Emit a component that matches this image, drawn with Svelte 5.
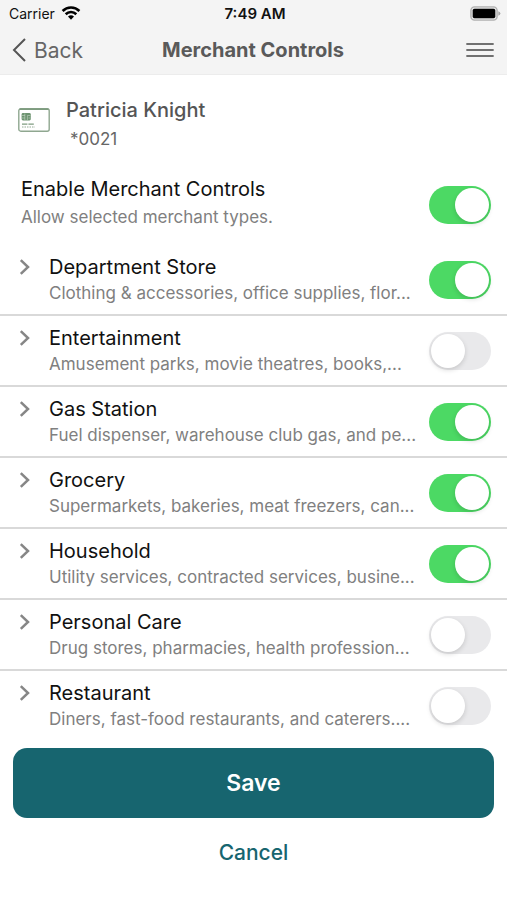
<script>
  let enabled = $state(true);
  let merchants = $state([
    { name: 'Department Store', detail: 'Clothing & accessories, office supplies, flor...', on: true },
    { name: 'Entertainment', detail: 'Amusement parks, movie theatres, books,...', on: false },
    { name: 'Gas Station', detail: 'Fuel dispenser, warehouse club gas, and pe...', on: true },
    { name: 'Grocery', detail: 'Supermarkets, bakeries, meat freezers, can...', on: true },
    { name: 'Household', detail: 'Utility services, contracted services, busine...', on: true },
    { name: 'Personal Care', detail: 'Drug stores, pharmacies, health profession...', on: false },
    { name: 'Restaurant', detail: 'Diners, fast-food restaurants, and caterers....', on: false }
  ]);
</script>

<div class="screen">
  <header>
    <div class="status">
      <div class="carrier">
        <span>Carrier</span>
        <svg width="20" height="14" viewBox="0 0 20 14" fill="none" stroke="#000" stroke-width="2.6">
          <path d="M1.6 5A12 12 0 0 1 18.4 5" />
          <path d="M4.7 8.2A7.6 7.6 0 0 1 15.3 8.2" />
          <path d="M10 13.7L7 10.6A4.3 4.3 0 0 1 13 10.6Z" fill="#000" stroke="none" />
        </svg>
      </div>
      <time>7:49 AM</time>
      <svg class="battery" width="31" height="15" viewBox="0 0 31 15">
        <rect x="0.9" y="0.9" width="26.2" height="13.2" rx="3.6" fill="#e4e4e4" stroke="#b0b0b0" stroke-width="1.4" />
        <rect x="2.7" y="2.7" width="22.6" height="9.6" rx="1.8" fill="#000" />
        <path d="M28.3 5.2Q30.4 6 30.4 7.5T28.3 9.8Z" fill="#a6a6a6" />
      </svg>
    </div>
    <nav>
      <a class="back" href="#back">
        <svg width="14" height="24" viewBox="0 0 14 24" fill="none" stroke="#555" stroke-width="2">
          <path d="M13 1L2 12L13 23" />
        </svg>
        Back
      </a>
      <h1>Merchant Controls</h1>
      <button class="menu" aria-label="Menu">
        <svg width="28" height="16" viewBox="0 0 28 16" stroke="#707070" stroke-width="1.8" stroke-linecap="round">
          <path d="M1 2H27M1 8H27M1 14H27" />
        </svg>
      </button>
    </nav>
  </header>

  <main>
    <section class="account">
      <svg width="32" height="24" viewBox="0 0 32 24">
        <rect x="0.8" y="0.8" width="30.4" height="22.4" rx="2" fill="#fff" stroke="#8fa790" stroke-width="1.4" />
        <path d="M1.5 1.2H30.5" stroke="#779678" stroke-width="1.4" />
        <rect x="3.6" y="5" width="9.2" height="7.4" rx="1.4" fill="#6d9370" />
        <path d="M4 7.5H7M4 10H7M9.4 7.5V12M9.4 7.5H12.4M10.5 10H12.4M6.8 5.5V12" stroke="#c5d6c6" stroke-width="0.6" />
        <path d="M4 16.2H16" stroke="#7f9c80" stroke-width="1.3" stroke-dasharray="5.4 1" />
        <path d="M4 19H17" stroke="#92a993" stroke-width="1" stroke-dasharray="1.5 1" />
      </svg>
      <div>
        <h2>Patricia Knight</h2>
        <p>*0021</p>
      </div>
    </section>

    <section class="enable">
      <label for="enable-all">
        <span class="name">Enable Merchant Controls</span>
        <span class="detail">Allow selected merchant types.</span>
      </label>
      <input id="enable-all" class="toggle" type="checkbox" role="switch" bind:checked={enabled} />
    </section>

    <ul>
      {#each merchants as merchant, i}
        <li>
          <button class="expand" aria-label="Show {merchant.name} details">
            <svg width="12" height="16" viewBox="0 0 12 16" fill="none" stroke="#868686" stroke-width="2.5">
              <path d="M1.8 1.2L9 8L1.8 14.8" />
            </svg>
          </button>
          <label for="merchant-{i}">
            <span class="name">{merchant.name}</span>
            <span class="detail">{merchant.detail}</span>
          </label>
          <input id="merchant-{i}" class="toggle" type="checkbox" role="switch" bind:checked={merchant.on} />
        </li>
      {/each}
    </ul>
  </main>

  <footer>
    <button class="save">Save</button>
    <button class="cancel">Cancel</button>
  </footer>
</div>

<style>
  :global(body) {
    margin: 0;
    background: #fff;
  }
  .screen {
    font-family: Inter, 'Liberation Sans', sans-serif;
    color: #111;
  }
  h1, h2, p, ul {
    margin: 0;
    padding: 0;
  }
  button {
    font-family: inherit;
    border: 0;
    padding: 0;
    background: none;
    cursor: pointer;
  }
  svg {
    display: block;
    flex: none;
  }
  header {
    background: #f4f4f4;
    border-bottom: 1px solid #ececec;
  }
  .status,
  nav {
    display: grid;
    grid-template-columns: 1fr auto 1fr;
    align-items: center;
  }
  .status {
    height: 26px;
    padding: 0 6px 0 9px;
    font-size: 14px;
  }
  .carrier {
    display: flex;
    align-items: center;
    gap: 6px;
  }
  time {
    font-size: 15px;
    font-weight: 600;
  }
  .battery,
  .menu {
    justify-self: end;
  }
  nav {
    height: 48px;
    padding: 0 13px 0 12px;
  }
  .back {
    display: flex;
    align-items: center;
    gap: 8px;
    font-size: 21px;
    color: #666;
    text-decoration: none;
  }
  h1 {
    font-size: 20px;
    font-weight: 700;
    color: #5a5a5a;
  }
  .account {
    display: flex;
    align-items: flex-start;
    gap: 16px;
    padding: 20px 18px 0;
  }
  .account svg {
    margin-top: 13px;
  }
  h2 {
    font-size: 20px;
    line-height: 30px;
    font-weight: 500;
    color: #555;
  }
  .account p {
    padding-left: 4px;
    font-size: 17px;
    line-height: 28px;
    color: #666;
  }
  .enable {
    display: flex;
    align-items: center;
    justify-content: space-between;
    padding: 22px 16px 10px 21px;
  }
  .name,
  .detail {
    display: block;
    white-space: nowrap;
  }
  .name {
    font-size: 20px;
    line-height: 28px;
  }
  .detail {
    font-size: 17px;
    line-height: 24px;
    color: #808080;
  }
  .enable label {
    padding-bottom: 4px;
  }
  .enable .detail {
    line-height: 28px;
  }
  ul {
    list-style: none;
  }
  li {
    display: flex;
    align-items: center;
    height: 69px;
    padding-right: 16px;
    border-bottom: 2px solid #d9d9d9;
  }
  li:last-child {
    border-bottom: 0;
  }
  li label {
    flex: 1;
    min-width: 0;
    overflow: hidden;
    padding-bottom: 2px;
  }
  .expand {
    align-self: flex-start;
    padding: 14px 18px 0 19px;
  }
  .toggle {
    appearance: none;
    flex: none;
    box-sizing: border-box;
    width: 62px;
    height: 38px;
    margin: 0;
    padding: 2px;
    border-radius: 19px;
    background: #e9e9eb;
    cursor: pointer;
  }
  .toggle::before {
    content: '';
    display: block;
    width: 34px;
    height: 34px;
    border-radius: 50%;
    background: #fff;
    box-shadow: 0 2px 5px rgba(0, 0, 0, 0.15);
  }
  .toggle:checked {
    background: #4cd964;
  }
  .toggle:checked::before {
    margin-left: auto;
  }
  footer {
    display: flex;
    flex-direction: column;
    gap: 12px;
    padding: 8px 13px 20px;
  }
  .save {
    height: 70px;
    border-radius: 14px;
    background: #17656f;
    color: #fff;
    font-size: 23px;
    font-weight: 600;
  }
  .cancel {
    height: 44px;
    color: #17656f;
    font-size: 21px;
    font-weight: 500;
  }
</style>
